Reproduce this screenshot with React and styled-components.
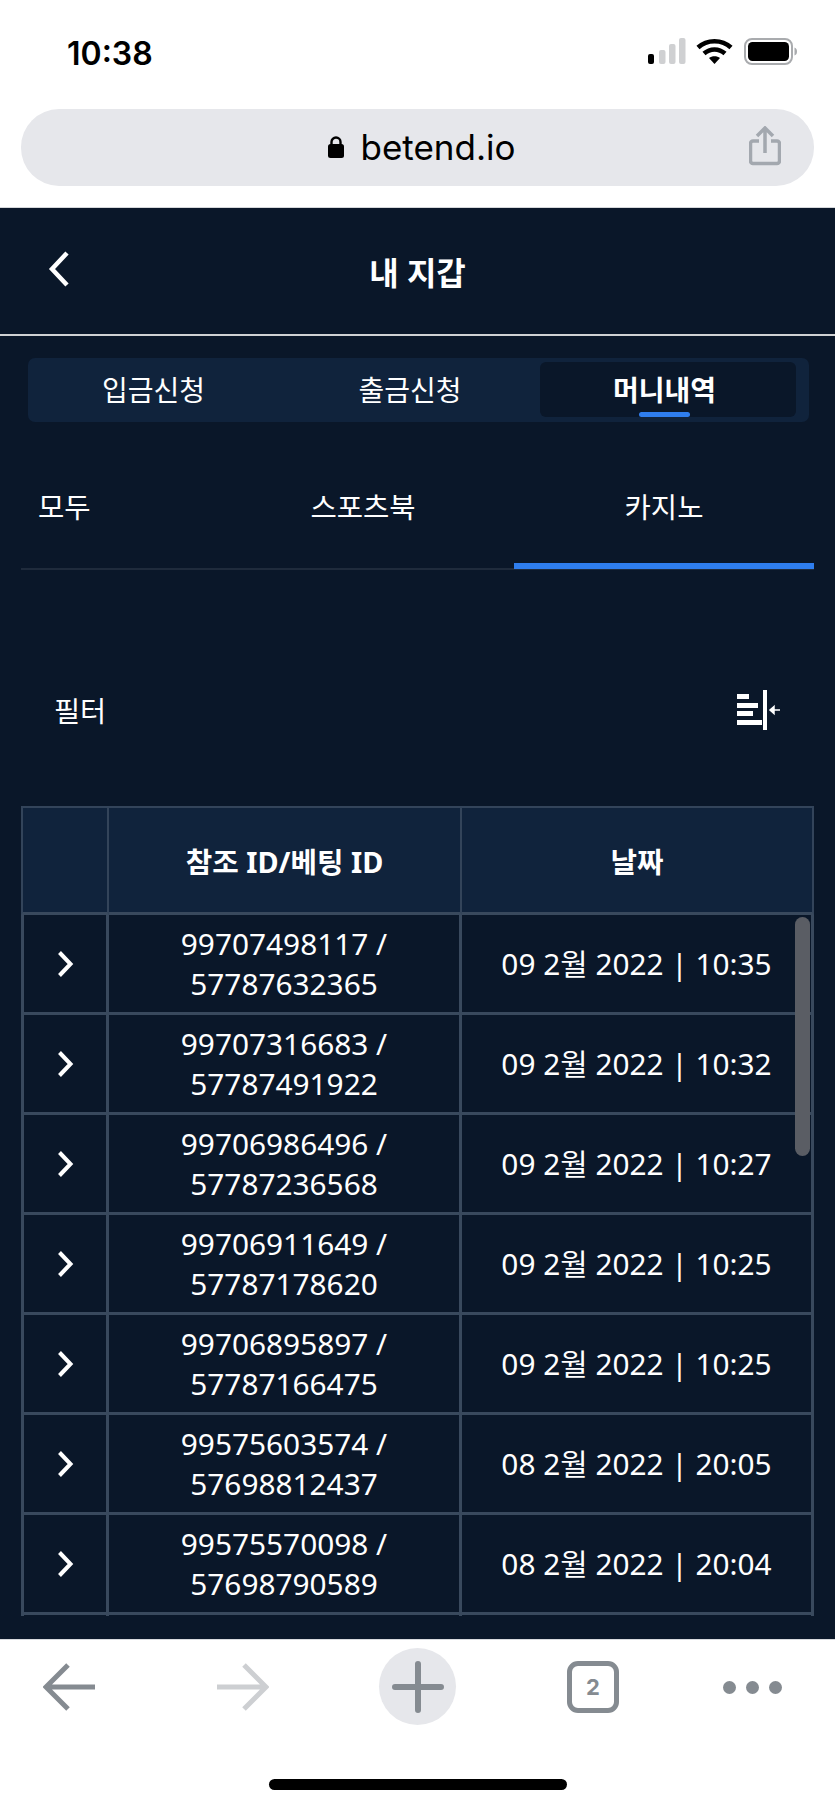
import React from "react"
import styled, { createGlobalStyle } from "styled-components"

const navy = "#0a1729"
const panel = "#10233c"
const line = "#39495d"
const headLine = "#33445a"
const blue = "#2f7eee"
const sans = `"Noto Sans", "Noto Sans CJK KR", sans-serif`

const GlobalStyle = createGlobalStyle`
  html, body {
    margin: 0;
    padding: 0;
    background: #fff;
  }
  * {
    box-sizing: border-box;
  }
`

const Page = styled.div`
  width: 835px;
  height: 1807px;
  display: flex;
  flex-direction: column;
  overflow: hidden;
  font-family: ${sans};
  color: #fff;
`

const TopChrome = styled.div`
  height: 207px;
  flex: none;
  background: #fff;
  padding: 0 21px;
`

const StatusBar = styled.div`
  height: 109px;
  display: flex;
  align-items: flex-start;
  justify-content: space-between;
  padding: 34px 16px 0 46px;
`

const Clock = styled.div`
  font-family: Inter, sans-serif;
  font-size: 32px;
  font-weight: 600;
  line-height: 40px;
  color: #000;
`

const StatusIcons = styled.div`
  display: flex;
  align-items: center;
  margin-top: 4px;
`

const UrlBar = styled.div`
  height: 77px;
  border-radius: 38px;
  background: #e6e7eb;
  display: flex;
  align-items: center;
  justify-content: center;
  gap: 15px;
  position: relative;
  padding: 0 0 2px 8px;
  color: #000;
  font-family: Inter, sans-serif;
  font-size: 35px;
`

const ShareButton = styled.svg`
  position: absolute;
  right: 33px;
  top: 17px;
`

const Screen = styled.div`
  flex: 1;
  min-height: 0;
  background: ${navy};
  border-top: 1px solid #d5d7da;
  display: flex;
  flex-direction: column;
`

const Header = styled.header`
  height: 128px;
  flex: none;
  border-bottom: 2px solid #cfd1d3;
  display: flex;
  align-items: center;
  justify-content: center;
  position: relative;
`

const BackIcon = styled.svg`
  position: absolute;
  left: 48px;
  top: 43px;
`

const Title = styled.h1`
  margin: 0;
  font-size: 32px;
  font-weight: 700;
`

const MainTabs = styled.nav`
  margin: 22px 26px 0 28px;
  height: 64px;
  padding: 4px 13px 5px 11px;
  background: ${panel};
  border-radius: 7px;
  display: grid;
  grid-template-columns: 251px 250px 1fr;
`

const MainTab = styled.div`
  position: relative;
  display: flex;
  align-items: center;
  justify-content: center;
  font-size: 28px;
  font-weight: ${p => (p.$active ? 700 : 400)};
  background: ${p => (p.$active ? navy : "transparent")};
  border-radius: 6px;
  padding: 0 ${p => p.$shift}px 2px 0;

  ${p =>
    p.$active &&
    `&::after {
      content: "";
      position: absolute;
      left: 99px;
      bottom: 0;
      width: 51px;
      height: 5px;
      border-radius: 3px;
      background: ${blue};
    }`}
`

const SubTabs = styled.nav`
  margin: 37px 21px 0;
  height: 111px;
  border-bottom: 2px solid #1f2b3c;
  display: grid;
  grid-template-columns: 191px 302px 1fr;
`

const SubTab = styled.div`
  display: flex;
  align-items: flex-start;
  justify-content: ${p => (p.$left ? "flex-start" : "center")};
  padding: 28px 0 0 ${p => (p.$left ? "17px" : "0")};
  font-size: 28.6px;
  line-height: 40px;
  border-bottom: ${p => (p.$active ? `6px solid ${blue}` : "none")};
  margin-bottom: ${p => (p.$active ? "-1px" : "0")};
`

const FilterRow = styled.div`
  margin-top: 116px;
  height: 48px;
  padding: 0 55px 0 54px;
  display: flex;
  align-items: center;
  justify-content: space-between;
  font-size: 28.4px;
`

const FilterLabel = styled.span`
  padding-bottom: 2px;
`

const TableWrap = styled.div`
  position: relative;
  margin: 72px 21px 0;
  height: 810px;
  overflow: hidden;
`

const Table = styled.table`
  width: 793px;
  border-collapse: separate;
  border-spacing: 0;
  table-layout: fixed;
`

const HeadCell = styled.th`
  height: 109px;
  background: ${panel};
  border-top: 2px solid ${headLine};
  border-right: 2px solid ${headLine};
  border-left: ${p => (p.$first ? `2px solid ${headLine}` : "none")};
  border-bottom: 3px solid ${line};
  font-size: 28.8px;
  font-weight: 700;
  text-align: center;
  padding: 0;
`

const Cell = styled.td`
  height: 100px;
  border-right: 3px solid ${line};
  border-left: ${p => (p.$first ? `3px solid ${line}` : "none")};
  border-bottom: 3px solid ${line};
  font-size: 29.8px;
  line-height: 40px;
  text-align: center;
  padding: 0;
`

const ArrowIcon = styled.svg`
  display: block;
  margin: 0 auto;
`

const Scrollbar = styled.div`
  position: absolute;
  right: 4px;
  top: 111px;
  width: 15px;
  height: 239px;
  border-radius: 8px;
  background: #5a5d64;
`

const BottomBar = styled.div`
  height: 168px;
  flex: none;
  background: #fff;
  border-top: 1px solid #d8dadd;
  display: flex;
  flex-direction: column;
  align-items: center;
`

const BarIcons = styled.div`
  position: relative;
  width: 100%;
  height: 139px;
`

const BarIcon = styled.svg`
  position: absolute;
  left: ${p => p.$x}px;
  top: ${p => p.$y}px;
`

const PlusCircle = styled.div`
  position: absolute;
  left: 379px;
  top: 8px;
  width: 77px;
  height: 77px;
  border-radius: 50%;
  background: #e6e7eb;
  display: flex;
  align-items: center;
  justify-content: center;
`

const TabCount = styled.div`
  position: absolute;
  left: 567px;
  top: 21px;
  width: 52px;
  height: 52px;
  border: 5px solid #858b91;
  border-radius: 11px;
  display: flex;
  align-items: center;
  justify-content: center;
  color: #858b91;
  font-family: Inter, sans-serif;
  font-size: 22px;
  font-weight: 700;
`

const Dots = styled.div`
  position: absolute;
  left: 723px;
  top: 41px;
  display: flex;
  gap: 10px;
`

const Dot = styled.span`
  width: 13px;
  height: 13px;
  border-radius: 50%;
  background: #858b91;
`

const HomeBar = styled.div`
  width: 298px;
  height: 11px;
  border-radius: 6px;
  background: #000;
`

const rows = [
  ["99707498117", "57787632365", "09 2월 2022 | 10:35"],
  ["99707316683", "57787491922", "09 2월 2022 | 10:32"],
  ["99706986496", "57787236568", "09 2월 2022 | 10:27"],
  ["99706911649", "57787178620", "09 2월 2022 | 10:25"],
  ["99706895897", "57787166475", "09 2월 2022 | 10:25"],
  ["99575603574", "57698812437", "08 2월 2022 | 20:05"],
  ["99575570098", "57698790589", "08 2월 2022 | 20:04"]
]

const App = () => {
  return (
    <Page>
      <GlobalStyle />
      <TopChrome>
        <StatusBar>
          <Clock>10:38</Clock>
          <StatusIcons>
            <svg width="150" height="28" viewBox="0 0 150 28">
              <rect x="0" y="16" width="6" height="10" rx="2" fill="#000" />
              <rect x="11" y="12" width="6.5" height="14" rx="2" fill="#cfd0d2" />
              <rect x="21" y="6" width="6.5" height="20" rx="2" fill="#cfd0d2" />
              <rect x="31" y="0" width="6.5" height="26" rx="2" fill="#cfd0d2" />
              <path d="M50 9.5 C59 1 74 1 83 9.5" fill="none" stroke="#000" strokeWidth="4.5" />
              <path d="M56 15.5 C62 10 71 10 77 15.5" fill="none" stroke="#000" strokeWidth="4.5" />
              <path d="M61 20 L66.5 26 L72 20 C69 17.5 64 17.5 61 20 Z" fill="#000" />
              <rect x="97" y="1" width="47" height="25" rx="7" fill="none" stroke="#a9abae" strokeWidth="2" />
              <rect x="100" y="4" width="41" height="19" rx="4.5" fill="#000" />
              <path d="M146.5 9.5 C148.5 10.5 149 11.5 149 13.5 C149 15.5 148.5 16.5 146.5 17.5 Z" fill="#a9abae" />
            </svg>
          </StatusIcons>
        </StatusBar>
        <UrlBar>
          <svg width="18" height="22" viewBox="0 0 18 22">
            <path d="M4.5 9 V6 a4.5 4.5 0 0 1 9 0 V9" fill="none" stroke="#000" strokeWidth="2.4" />
            <rect x="1" y="8" width="16" height="14" rx="2.5" fill="#000" />
          </svg>
          <span>betend.io</span>
          <ShareButton width="32" height="40" viewBox="0 0 32 40">
            <path d="M10 15 H4 a2.5 2.5 0 0 0 -2.5 2.5 V35 a2.5 2.5 0 0 0 2.5 2.5 H28 a2.5 2.5 0 0 0 2.5 -2.5 V17.5 a2.5 2.5 0 0 0 -2.5 -2.5 H22" fill="none" stroke="#a3a8af" strokeWidth="3.5" />
            <path d="M16 27 V3 M8 10 L16 2 L24 10" fill="none" stroke="#a3a8af" strokeWidth="3.5" />
          </ShareButton>
        </UrlBar>
      </TopChrome>

      <Screen>
        <Header>
          <BackIcon width="22" height="36" viewBox="0 0 22 36">
            <path d="M19 2 L4 18 L19 34" fill="none" stroke="#fff" strokeWidth="4.5" />
          </BackIcon>
          <Title>내 지갑</Title>
        </Header>

        <MainTabs>
          <MainTab $shift={22}>입금신청</MainTab>
          <MainTab $shift={10}>출금신청</MainTab>
          <MainTab $shift={7} $active>
            머니내역
          </MainTab>
        </MainTabs>

        <SubTabs>
          <SubTab $left>모두</SubTab>
          <SubTab>스포츠북</SubTab>
          <SubTab $active>카지노</SubTab>
        </SubTabs>

        <FilterRow>
          <FilterLabel>필터</FilterLabel>
          <svg width="43" height="40" viewBox="0 0 43 40">
            <rect x="0" y="4" width="12" height="5" fill="#fff" />
            <rect x="0" y="13" width="21" height="5" fill="#fff" />
            <rect x="0" y="21" width="16" height="5" fill="#fff" />
            <rect x="0" y="30" width="25" height="5" fill="#fff" />
            <rect x="26" y="0" width="4" height="40" fill="#fff" />
            <path d="M43 20 H36 M37 16.5 L33 20 L37 23.5 Z" fill="#fff" stroke="#fff" strokeWidth="1.5" />
          </svg>
        </FilterRow>

        <TableWrap>
          <Table>
            <colgroup>
              <col style={{ width: 88 }} />
              <col style={{ width: 353 }} />
              <col />
            </colgroup>
            <thead>
              <tr>
                <HeadCell $first />
                <HeadCell>참조 ID/베팅 ID</HeadCell>
                <HeadCell>날짜</HeadCell>
              </tr>
            </thead>
            <tbody>
              {rows.map(row => (
                <tr key={row[0]}>
                  <Cell $first>
                    <ArrowIcon width="17" height="28" viewBox="0 0 17 28">
                      <path d="M2.5 2.5 L13.5 14 L2.5 25.5" fill="none" stroke="#fff" strokeWidth="4" />
                    </ArrowIcon>
                  </Cell>
                  <Cell>
                    {row[0]} /<br />
                    {row[1]}
                  </Cell>
                  <Cell>{row[2]}</Cell>
                </tr>
              ))}
              <tr>
                <Cell $first />
                <Cell />
                <Cell />
              </tr>
            </tbody>
          </Table>
          <Scrollbar />
        </TableWrap>
      </Screen>

      <BottomBar>
        <BarIcons>
          <BarIcon $x={43} $y={23} width="52" height="48" viewBox="0 0 52 48">
            <path d="M25 2 L3 24 L25 46 M3 24 H52" fill="none" stroke="#858b91" strokeWidth="5" />
          </BarIcon>
          <BarIcon $x={217} $y={23} width="52" height="48" viewBox="0 0 52 48">
            <path d="M27 2 L49 24 L27 46 M49 24 H0" fill="none" stroke="#cdcfd2" strokeWidth="5" />
          </BarIcon>
          <PlusCircle>
            <svg width="52" height="52" viewBox="0 0 52 52">
              <path d="M26 3 V49 M3 26 H49" fill="none" stroke="#858b91" strokeWidth="6" strokeLinecap="round" />
            </svg>
          </PlusCircle>
          <TabCount>2</TabCount>
          <Dots>
            <Dot />
            <Dot />
            <Dot />
          </Dots>
        </BarIcons>
        <HomeBar />
      </BottomBar>
    </Page>
  )
}

export default App
